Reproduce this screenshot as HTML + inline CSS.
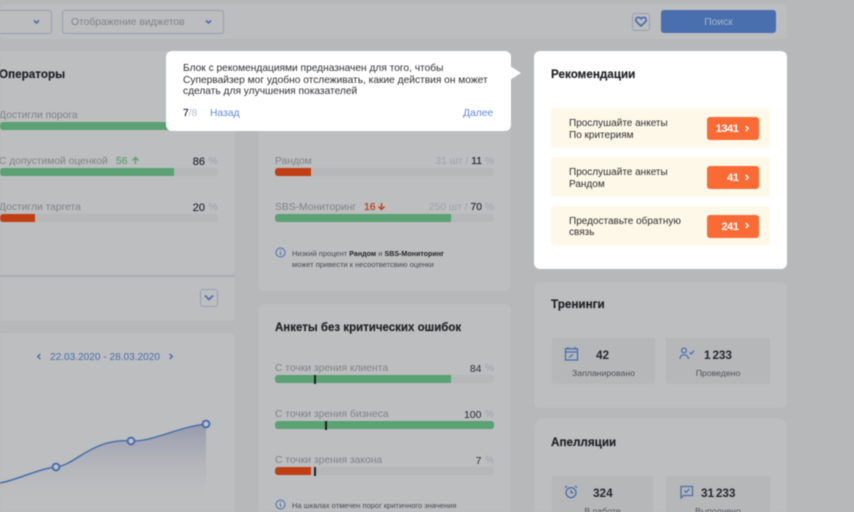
<!DOCTYPE html>
<html lang="ru"><head><meta charset="utf-8"><title>Рекомендации</title>
<style>
html,body{margin:0;padding:0;width:854px;height:512px;overflow:hidden;background:#b6b8b9}
body{font-family:"Liberation Sans",sans-serif;position:relative}
#w{position:absolute;left:0;top:0;width:854px;height:512px;overflow:hidden}
#w div,#w span.a,#w svg{position:absolute}
.t{white-space:nowrap;line-height:12px}
.card{background:#bcbebf;border-radius:6px}
.track{background:#b5b7b8;border-radius:3px;height:8px;overflow:hidden}
.g{background:#5aa173;height:100%;position:absolute;left:0;top:0}
.r{background:#c03e13;height:100%;position:absolute;left:0;top:0}
.tick{width:1.5px;height:9px;background:#1c2024}
.lab{font-size:10.3px;color:#808387}
.val{font-size:10.3px;color:#2c2f33;text-align:right}
.val i{font-style:normal;color:#a0a2ae}
.vn{-webkit-text-stroke:.2px #2c2f33}
.h{font-size:11.7px;font-weight:bold;color:#1f2124;-webkit-text-stroke:.15px #1f2124}
.sub{background:#b5b7b8;border-radius:2px}
.num{font-size:11.8px;font-weight:bold;color:#26282c}
.cap{font-size:8.7px;color:#505357;text-align:center}
.row{background:#fef8e8;border-radius:3px;left:551px;width:219px;height:40px}
.btn{background:#f96a35;border-radius:3px;left:707px;width:51.5px;height:23px;color:#fff;font-size:11.2px;letter-spacing:-.5px;font-weight:bold;line-height:25px;text-align:right;box-sizing:border-box;padding-right:20px}
.rt{left:569px;font-size:10px;line-height:11.6px;color:#2c2d30;white-space:nowrap}
.note{font-size:7.5px;color:#484b4f;white-space:nowrap;line-height:11px}
.note b{color:#232528;font-size:7.1px}
</style></head><body>
<div id="w" style="filter:blur(.45px)">
<!-- top bar -->
<div style="left:0;top:4px;width:787px;height:35px;background:#bbbdbe;border-radius:4px"></div>
<div style="left:-10px;top:10px;width:60px;height:21.5px;border:1px solid #979fb4;border-radius:3px"></div>
<svg style="left:33px;top:19px" width="7" height="6" viewBox="0 0 7 6"><path d="M1 1.5L3.5 4L6 1.5" fill="none" stroke="#4a6fae" stroke-width="1.6"/></svg>
<div style="left:62px;top:10px;width:160px;height:21.5px;border:1px solid #979fb4;border-radius:3px"></div>
<div class="t" style="left:71px;top:16px;font-size:10.3px;color:#808387;line-height:14px">Отображение виджетов</div>
<svg style="left:205px;top:19px" width="7" height="6" viewBox="0 0 7 6"><path d="M1 1.5L3.5 4L6 1.5" fill="none" stroke="#4a6fae" stroke-width="1.6"/></svg>
<div style="left:632px;top:13px;width:16px;height:16px;border:1px solid #979fb4;border-radius:3px"></div>
<svg style="left:635px;top:16px" width="12" height="11" viewBox="0 0 12 11"><path d="M6 10L1.6 5.8C.1 4.1 1 1.3 3.4 1.3C4.6 1.3 5.4 1.9 6 2.8C6.6 1.9 7.4 1.3 8.6 1.3C11 1.3 11.9 4.1 10.4 5.8Z" fill="none" stroke="#4a6fae" stroke-width="1.7"/></svg>
<div style="left:661px;top:10px;width:115px;height:23px;background:#4a6fae;border-radius:3px;color:#a3b4d2;font-size:10.3px;line-height:25px;text-align:center">Поиск</div>

<!-- left card -->
<div class="card" style="left:-10px;top:51px;width:245px;height:224px"></div>
<div style="left:0;top:275px;width:235px;height:1.5px;background:#a6abb9"></div>
<div class="card" style="left:-10px;top:277px;width:245px;height:44px;border-radius:0 0 4px 4px"></div>
<div class="h t" style="left:-1px;top:69px">Операторы</div>
<div class="lab t" style="left:-1px;top:110px">Достигли порога</div>
<div class="track" style="left:0;top:122px;width:218px"><div class="g" style="width:175px"></div></div>
<div class="lab t" style="left:-1px;top:156px">С допустимой оценкой</div>
<div class="t" style="left:116px;top:156px;font-size:10.3px;color:#5fa379;-webkit-text-stroke:.25px #5fa379">56</div>
<svg style="left:131px;top:156px" width="9" height="9" viewBox="0 0 9 9"><path d="M4.5 8V1.5M1.5 4.5L4.5 1.5L7.5 4.5" fill="none" stroke="#5aa173" stroke-width="1.4"/></svg>
<div class="val t vn" style="left:170px;top:156px;width:35px;font-size:11px">86</div>
<div class="val t" style="left:200px;top:156px;width:17.5px"><i>%</i></div>
<div class="track" style="left:0;top:168px;width:218px"><div class="g" style="width:174px"></div></div>
<div class="lab t" style="left:-1px;top:202px">Достигли таргета</div>
<div class="val t vn" style="left:170px;top:202px;width:35px;font-size:11px">20</div>
<div class="val t" style="left:200px;top:202px;width:17.5px"><i>%</i></div>
<div class="track" style="left:0;top:214px;width:218px"><div class="r" style="width:35px"></div></div>
<div style="left:200px;top:289px;width:16px;height:16px;border:1px solid #979fb4;border-radius:3px"></div>
<svg style="left:203px;top:294px" width="12" height="8" viewBox="0 0 12 8"><path d="M2 1.5L6 5.5L10 1.5" fill="none" stroke="#4a6fae" stroke-width="1.7"/></svg>

<!-- chart card -->
<div class="card" style="left:-10px;top:333px;width:245px;height:190px"></div>
<svg style="left:36px;top:353px" width="6" height="7" viewBox="0 0 6 7"><path d="M4.3 1L1.8 3.5L4.3 6" fill="none" stroke="#4a6fae" stroke-width="1.5"/></svg>
<div class="t" style="left:50px;top:352px;font-size:10.1px;color:#4a6fae">22.03.2020 - 28.03.2020</div>
<svg style="left:168px;top:353px" width="6" height="7" viewBox="0 0 6 7"><path d="M1.7 1L4.2 3.5L1.7 6" fill="none" stroke="#4a6fae" stroke-width="1.5"/></svg>
<svg style="left:0;top:412px" width="220" height="100" viewBox="0 0 220 100">
<defs><linearGradient id="f" x1="0" y1="0" x2="0" y2="1"><stop offset="0" stop-color="#8a8ea6" stop-opacity=".75"/><stop offset=".85" stop-color="#bcbebf" stop-opacity=".1"/></linearGradient></defs>
<path d="M0 71C20 67 38 57 56 55C76 53 92 26 131 29C152 30 178 15 206 12L206 100L0 100Z" fill="url(#f)"/>
<path d="M0 71C20 67 38 57 56 55C76 53 92 26 131 29C152 30 178 15 206 12" fill="none" stroke="#4a6fae" stroke-width="1.5"/>
<circle cx="56" cy="55" r="3.4" fill="#c0c3c8" stroke="#4a6fae" stroke-width="2"/>
<circle cx="131" cy="29" r="3.4" fill="#c0c3c8" stroke="#4a6fae" stroke-width="2"/>
<circle cx="206" cy="12" r="3.4" fill="#c0c3c8" stroke="#4a6fae" stroke-width="2"/>
</svg>

<!-- middle card 1 -->
<div class="card" style="left:258px;top:60px;width:253px;height:231px"></div>
<div class="lab t" style="left:275px;top:156px">Рандом</div>
<div class="val t" style="left:400px;top:156px;width:94px"><i>31 шт /</i> <span class="vn">11</span> <i>%</i></div>
<div class="track" style="left:275px;top:168px;width:219px"><div class="r" style="width:36px"></div></div>
<div class="lab t" style="left:275px;top:202px">SBS-Мониторинг</div>
<div class="t" style="left:364px;top:202px;font-size:10.3px;color:#c03e13;-webkit-text-stroke:.25px #c03e13">16</div>
<svg style="left:377px;top:202px" width="9" height="9" viewBox="0 0 9 9"><path d="M4.5 1V7.5M1.5 4.5L4.5 7.5L7.5 4.5" fill="none" stroke="#c03e13" stroke-width="1.4"/></svg>
<div class="val t" style="left:400px;top:202px;width:94px"><i>250 шт /</i> <span class="vn">70</span> <i>%</i></div>
<div class="track" style="left:275px;top:214px;width:219px"><div class="g" style="width:176px"></div></div>
<svg style="left:275px;top:247px" width="11" height="11" viewBox="0 0 11 11"><circle cx="5.5" cy="5.5" r="4.5" fill="none" stroke="#4a6fae" stroke-width="1"/><path d="M5.5 4.7V8M5.5 2.8V3.8" stroke="#4a6fae" stroke-width="1"/></svg>
<div class="note" style="left:292px;top:248px">Низкий процент <b>Рандом</b> и <b>SBS-Мониторинг</b></div>
<div class="note" style="left:292px;top:259px">может привести к несоответсвию оценки</div>

<!-- middle card 2 -->
<div class="card" style="left:258px;top:304px;width:253px;height:220px"></div>
<div class="h t" style="left:275px;top:322px;font-size:11.5px">Анкеты без критических ошибок</div>
<div class="lab t" style="left:275px;top:363px">С точки зрения клиента</div>
<div class="val t" style="left:430px;top:363px;width:51.5px;font-size:10.5px">84</div>
<div class="val t" style="left:480px;top:363px;width:14px"><i>%</i></div>
<div class="track" style="left:275px;top:375px;width:219px"><div class="g" style="width:176px"></div></div>
<div class="tick" style="left:314px;top:375px"></div>
<div class="lab t" style="left:275px;top:409px">С точки зрения бизнеса</div>
<div class="val t" style="left:430px;top:409px;width:51.5px;font-size:10.5px">100</div>
<div class="val t" style="left:480px;top:409px;width:14px"><i>%</i></div>
<div class="track" style="left:275px;top:421px;width:219px"><div class="g" style="width:219px"></div></div>
<div class="tick" style="left:325px;top:421px"></div>
<div class="lab t" style="left:275px;top:455px">С точки зрения закона</div>
<div class="val t" style="left:430px;top:455px;width:51.5px;font-size:10.5px">7</div>
<div class="val t" style="left:480px;top:455px;width:14px"><i>%</i></div>
<div class="track" style="left:275px;top:467px;width:219px"><div class="r" style="width:36px"></div></div>
<div class="tick" style="left:314px;top:467px"></div>
<svg style="left:275px;top:499px" width="11" height="11" viewBox="0 0 11 11"><circle cx="5.5" cy="5.5" r="4.5" fill="none" stroke="#4a6fae" stroke-width="1"/><path d="M5.5 4.7V8M5.5 2.8V3.8" stroke="#4a6fae" stroke-width="1"/></svg>
<div class="note" style="left:292px;top:500px">На шкалах отмечен порог критичного значения</div>

<!-- tooltip -->
<div style="left:166px;top:51px;width:345px;height:80px;background:#fff;border-radius:6px"></div>
<svg style="left:510px;top:63px" width="12" height="20" viewBox="0 0 12 20"><path d="M0 3L11 10L0 17Z" fill="#fff"/></svg>
<div style="left:183px;top:63px;font-size:10.2px;line-height:11.7px;color:#2e2f33;white-space:nowrap">Блок с рекомендациями предназначен для того, чтобы<br>Супервайзер мог удобно отслеживать, какие действия он может<br>сделать для улучшения показателей</div>
<div class="t" style="left:183px;top:108px;font-size:10.3px;color:#2a2c30"><span style="-webkit-text-stroke:.2px #2a2c30">7</span><span style="color:#b3bdd6">/8</span></div>
<div class="t" style="left:210px;top:108px;font-size:10.3px;color:#5f8ad6">Назад</div>
<div class="t" style="left:463px;top:108px;font-size:10.3px;color:#5f8ad6">Далее</div>

<!-- recommendations -->
<div style="left:534px;top:51px;width:253px;height:218px;background:#fff;border-radius:6px"></div>
<div class="h t" style="left:551px;top:69px">Рекомендации</div>
<div class="row" style="top:108px"></div>
<div class="row" style="top:157px"></div>
<div class="row" style="top:206px"></div>
<div class="rt" style="top:118px">Прослушайте анкеты<br>По критериям</div>
<div class="rt" style="top:167px">Прослушайте анкеты<br>Рандом</div>
<div class="rt" style="top:215.5px">Предоставьте обратную<br>связь</div>
<div class="btn" style="top:117px">1341</div>
<div class="btn" style="top:166px">41</div>
<div class="btn" style="top:214.5px">241</div>
<svg style="left:744px;top:125px" width="6" height="7" viewBox="0 0 6 7"><path d="M1.7 1L4.2 3.5L1.7 6" fill="none" stroke="#fff" stroke-width="1.4"/></svg>
<svg style="left:744px;top:174px" width="6" height="7" viewBox="0 0 6 7"><path d="M1.7 1L4.2 3.5L1.7 6" fill="none" stroke="#fff" stroke-width="1.4"/></svg>
<svg style="left:744px;top:222px" width="6" height="7" viewBox="0 0 6 7"><path d="M1.7 1L4.2 3.5L1.7 6" fill="none" stroke="#fff" stroke-width="1.4"/></svg>

<!-- trainings -->
<div class="card" style="left:534px;top:282px;width:253px;height:126px"></div>
<div class="h t" style="left:551px;top:299px">Тренинги</div>
<div class="sub" style="left:552px;top:338px;width:103px;height:46px"></div>
<div class="sub" style="left:666px;top:338px;width:104px;height:46px"></div>
<svg style="left:564px;top:346px" width="15" height="15" viewBox="0 0 15 15"><path d="M1.5 2.8H13.5V14H1.5ZM1.5 6H13.5M4 1V3.5M11 1V3.5M5 11.5L9 8.5" fill="none" stroke="#4a6fae" stroke-width="1.3"/></svg>
<div class="num t" style="left:596px;top:349px">42</div>
<div class="cap t" style="left:552px;top:367px;width:103px">Запланировано</div>
<svg style="left:679px;top:347px" width="16" height="13" viewBox="0 0 16 13"><circle cx="5" cy="3.5" r="2.4" fill="none" stroke="#4a6fae" stroke-width="1.2"/><path d="M1 12C1 9 3 7.8 5 7.8C7 7.8 9 9 9.6 12M10.5 5.5L12.2 7L15 3.8" fill="none" stroke="#4a6fae" stroke-width="1.2"/></svg>
<div class="num t" style="left:704px;top:349px;word-spacing:-1.2px;letter-spacing:-.1px">1 233</div>
<div class="cap t" style="left:666px;top:367px;width:104px">Проведено</div>

<!-- appeals -->
<div class="card" style="left:534px;top:418px;width:253px;height:110px;border-radius:10px"></div>
<div class="h t" style="left:551px;top:437px">Апелляции</div>
<div class="sub" style="left:552px;top:476px;width:101px;height:46px"></div>
<div class="sub" style="left:666px;top:476px;width:104px;height:46px"></div>
<svg style="left:564px;top:485px" width="14" height="14" viewBox="0 0 14 14"><circle cx="7" cy="7.6" r="5" fill="none" stroke="#4a6fae" stroke-width="1.3"/><path d="M7 5V7.8H9.4M1 2.8L3 1M13 2.8L11 1" fill="none" stroke="#4a6fae" stroke-width="1.3"/></svg>
<div class="num t" style="left:593px;top:487px">324</div>
<div class="cap t" style="left:552px;top:505px;width:101px">В работе</div>
<svg style="left:680px;top:485px" width="14" height="14" viewBox="0 0 14 14"><path d="M1 1.5H12.5V10.5H3.5L1 13Z" fill="none" stroke="#4a6fae" stroke-width="1.3"/><path d="M4.3 5.6L6.2 7.3L9.4 3.9" fill="none" stroke="#4a6fae" stroke-width="1.3"/></svg>
<div class="num t" style="left:701px;top:487px;word-spacing:-1.2px;letter-spacing:-.1px">31 233</div>
<div class="cap t" style="left:666px;top:505px;width:104px">Выполнено</div>
</div>
</body></html>
